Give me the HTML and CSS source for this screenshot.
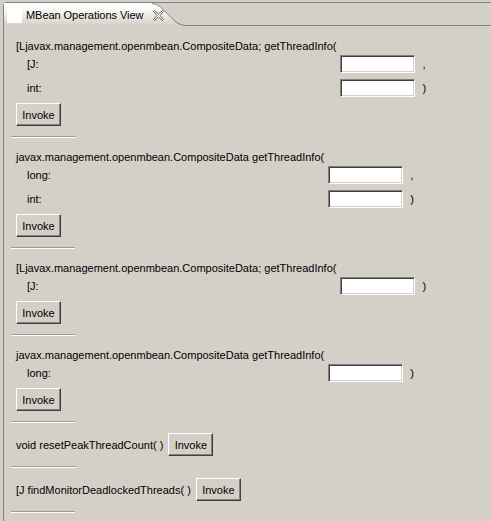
FILE: index.html
```html
<!DOCTYPE html>
<html>
<head>
<meta charset="utf-8">
<link rel="stylesheet" href="styles.css">
</head>
<body>
<div class="view">
  <div class="header">
    <svg class="tabshape" width="487" height="23" viewBox="0 0 487 23">
      <defs>
        <linearGradient id="tg" x1="0" y1="0" x2="0" y2="1">
          <stop offset="0" stop-color="#ffffff"/>
          <stop offset="0.35" stop-color="#f6f5f2"/>
          <stop offset="1" stop-color="#d4d0c8"/>
        </linearGradient>
      </defs>
      <path d="M0,0 H148 C160,0 168,22 181,22 V23 H0 Z" fill="url(#tg)"/>
      <path d="M148,0.5 C160,0.5 168,22.5 181,22.5 H487" fill="none" stroke="#808080" stroke-width="1"/>
    </svg>
    <div class="tab">
      <span class="tabicon"></span>
      <span class="tablabel">MBean Operations View</span>
      <svg class="close" width="11" height="11" viewBox="0 0 11 11">
        <path d="M0.5,1.5 L1.5,0.5 L5.5,4 L9.5,0.5 L10.5,1.5 L7,5.5 L10.5,9.5 L9.5,10.5 L5.5,7 L1.5,10.5 L0.5,9.5 L4,5.5 Z" fill="#ffffff" stroke="#555555" stroke-width="1" stroke-linejoin="round"/>
      </svg>
    </div>
  </div>
  <div class="content">
    <div class="op">
      <div class="grid">
        <div class="title">[Ljavax.management.openmbean.CompositeData; getThreadInfo(</div>
        <div class="label">[J:</div><div class="field"></div><div class="suffix">,</div>
        <div class="label">int:</div><div class="field"></div><div class="suffix">)</div>
      </div>
      <button class="btn">Invoke</button>
      <div class="sep"></div>
    </div>
    <div class="op">
      <div class="grid">
        <div class="title">javax.management.openmbean.CompositeData getThreadInfo(</div>
        <div class="label">long:</div><div class="field"></div><div class="suffix">,</div>
        <div class="label">int:</div><div class="field"></div><div class="suffix">)</div>
      </div>
      <button class="btn">Invoke</button>
      <div class="sep"></div>
    </div>
    <div class="op">
      <div class="grid">
        <div class="title">[Ljavax.management.openmbean.CompositeData; getThreadInfo(</div>
        <div class="label">[J:</div><div class="field"></div><div class="suffix">)</div>
      </div>
      <button class="btn">Invoke</button>
      <div class="sep"></div>
    </div>
    <div class="op">
      <div class="grid">
        <div class="title">javax.management.openmbean.CompositeData getThreadInfo(</div>
        <div class="label">long:</div><div class="field"></div><div class="suffix">)</div>
      </div>
      <button class="btn">Invoke</button>
      <div class="sep"></div>
    </div>
    <div class="op op-inline">
      <div class="row">
        <span class="name">void resetPeakThreadCount( )</span>
        <button class="btn">Invoke</button>
      </div>
      <div class="sep"></div>
    </div>
    <div class="op op-inline">
      <div class="row">
        <span class="name">[J findMonitorDeadlockedThreads( )</span>
        <button class="btn">Invoke</button>
      </div>
      <div class="sep"></div>
    </div>
  </div>
</div>
</body>
</html>
```

FILE: styles.css
```css
html, body {
  margin: 0;
  padding: 0;
  background: #d4d0c8;
}
body {
  width: 491px;
  height: 521px;
  overflow: hidden;
  font-family: "Liberation Sans", Arial, sans-serif;
  font-size: 11px;
  color: #000;
}
.view {
  margin: 2px 0 0 3px;
  border-top: 1px solid #808080;
  border-left: 1px solid #808080;
  border-top-left-radius: 4px;
  height: 540px;
}
.header {
  position: relative;
  height: 23px;
}
.tabshape {
  position: absolute;
  left: 0;
  top: 0;
}
.tab {
  position: relative;
  display: flex;
  align-items: center;
  height: 23px;
  padding-left: 3px;
}
.tabicon {
  width: 15px;
  height: 15px;
  background: #ffffff;
  margin-top: 1px;
}
.tablabel {
  margin-left: 4px;
  line-height: 14px;
  margin-top: 1px;
  letter-spacing: -0.05px;
}
.close {
  margin-left: 10px;
  margin-top: 1px;
}
.content {
  padding: 1px 0 0 7px;
}
.op {
  padding: 12px 0 0 5px;
}
.grid {
  display: grid;
  grid-template-columns: auto 75px auto;
  column-gap: 4px;
  row-gap: 6px;
  justify-content: start;
  align-items: center;
}
.title {
  grid-column: 1;
  line-height: 14px;
  height: 14px;
  margin-bottom: -4px;
  white-space: nowrap;
}
.label {
  grid-column: 1;
  padding-left: 11px;
  line-height: 18px;
}
.field {
  box-sizing: border-box;
  width: 75px;
  height: 18px;
  background: #ffffff;
  border-top: 1px solid #808080;
  border-left: 1px solid #808080;
  border-right: 1px solid #ffffff;
  border-bottom: 1px solid #ffffff;
  box-shadow: inset 1px 1px 0 #404040, inset -1px -1px 0 #d4d0c8;
}
.suffix {
  line-height: 18px;
  padding-left: 3px;
}
.btn {
  display: block;
  box-sizing: border-box;
  width: 45px;
  height: 23px;
  margin-top: 6px;
  padding: 0;
  font-family: "Liberation Sans", Arial, sans-serif;
  font-size: 11px;
  color: #000;
  background: #d4d0c8;
  border-top: 1px solid #ffffff;
  border-left: 1px solid #ffffff;
  border-right: 1px solid #404040;
  border-bottom: 1px solid #404040;
  box-shadow: inset -1px -1px 0 #808080;
  border-radius: 0;
}
.sep {
  width: 64px;
  height: 1px;
  margin: 10px 0 0 -5px;
  border-top: 1px solid #9c9a94;
  background: #ffffff;
}
.op-inline {
  padding-top: 10px;
}
.row {
  display: flex;
  align-items: center;
  gap: 5px;
}
.row .btn {
  margin-top: 0;
}
.name {
  white-space: nowrap;
}
```
